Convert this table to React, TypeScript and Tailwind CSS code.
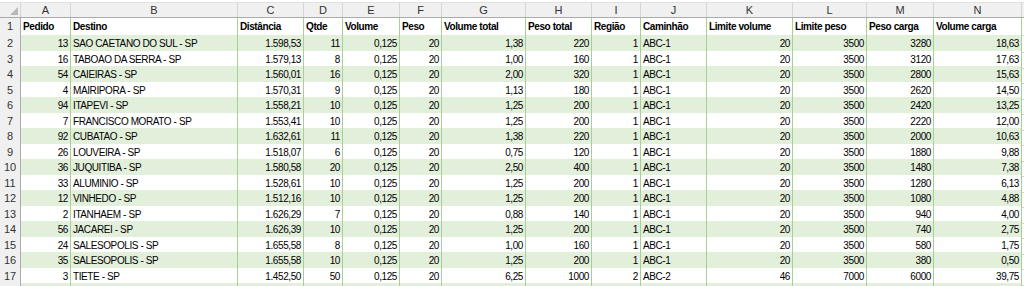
import React from 'react';

const cols = ['A', 'B', 'C', 'D', 'E', 'F', 'G', 'H', 'I', 'J', 'K', 'L', 'M', 'N'];

const headers = [
  'Pedido', 'Destino', 'Distância', 'Qtde', 'Volume', 'Peso', 'Volume total',
  'Peso total', 'Região', 'Caminhão', 'Limite volume', 'Limite peso', 'Peso carga', 'Volume carga',
];

// true = text column (left aligned)
const textCols = [false, true, false, false, false, false, false, false, false, true, false, false, false, false];

const rows: string[][] = [
  ['13', 'SAO CAETANO DO SUL - SP', '1.598,53', '11', '0,125', '20', '1,38', '220', '1', 'ABC-1', '20', '3500', '3280', '18,63'],
  ['16', 'TABOAO DA SERRA - SP', '1.579,13', '8', '0,125', '20', '1,00', '160', '1', 'ABC-1', '20', '3500', '3120', '17,63'],
  ['54', 'CAIEIRAS - SP', '1.560,01', '16', '0,125', '20', '2,00', '320', '1', 'ABC-1', '20', '3500', '2800', '15,63'],
  ['4', 'MAIRIPORA - SP', '1.570,31', '9', '0,125', '20', '1,13', '180', '1', 'ABC-1', '20', '3500', '2620', '14,50'],
  ['94', 'ITAPEVI - SP', '1.558,21', '10', '0,125', '20', '1,25', '200', '1', 'ABC-1', '20', '3500', '2420', '13,25'],
  ['7', 'FRANCISCO MORATO - SP', '1.553,41', '10', '0,125', '20', '1,25', '200', '1', 'ABC-1', '20', '3500', '2220', '12,00'],
  ['92', 'CUBATAO - SP', '1.632,61', '11', '0,125', '20', '1,38', '220', '1', 'ABC-1', '20', '3500', '2000', '10,63'],
  ['26', 'LOUVEIRA - SP', '1.518,07', '6', '0,125', '20', '0,75', '120', '1', 'ABC-1', '20', '3500', '1880', '9,88'],
  ['36', 'JUQUITIBA - SP', '1.580,58', '20', '0,125', '20', '2,50', '400', '1', 'ABC-1', '20', '3500', '1480', '7,38'],
  ['33', 'ALUMINIO - SP', '1.528,61', '10', '0,125', '20', '1,25', '200', '1', 'ABC-1', '20', '3500', '1280', '6,13'],
  ['12', 'VINHEDO - SP', '1.512,16', '10', '0,125', '20', '1,25', '200', '1', 'ABC-1', '20', '3500', '1080', '4,88'],
  ['2', 'ITANHAEM - SP', '1.626,29', '7', '0,125', '20', '0,88', '140', '1', 'ABC-1', '20', '3500', '940', '4,00'],
  ['56', 'JACAREI - SP', '1.626,39', '10', '0,125', '20', '1,25', '200', '1', 'ABC-1', '20', '3500', '740', '2,75'],
  ['24', 'SALESOPOLIS - SP', '1.655,58', '8', '0,125', '20', '1,00', '160', '1', 'ABC-1', '20', '3500', '580', '1,75'],
  ['35', 'SALESOPOLIS - SP', '1.655,58', '10', '0,125', '20', '1,25', '200', '1', 'ABC-1', '20', '3500', '380', '0,50'],
  ['3', 'TIETE - SP', '1.452,50', '50', '0,125', '20', '6,25', '1000', '2', 'ABC-2', '46', '7000', '6000', '39,75'],
];

const grid =
  'grid grid-cols-[21px_50px_167px_66px_39px_57px_42px_84px_66px_49px_66px_86px_74px_67px_88px_1fr]';

const App: React.FC = () => {
  return (
    <div
      className="w-[1024px] h-[286px] overflow-hidden bg-white text-[10px] tracking-[-0.4px] text-black"
      style={{ fontFamily: '"Liberation Sans", Arial, sans-serif' }}
    >
      {/* strip under the formula bar */}
      <div className="h-[3px] bg-white border-b border-[#e1e1e1]" />

      {/* column letters */}
      <div className={`${grid} h-[15px] bg-[#f0f0f0] text-[#333] text-[11px] tracking-normal border-b border-[#ababab]`}>
        <div className="flex items-end justify-end pr-[2px] pb-[2px] border-r border-[#d4d4d4]">
          <svg width="8" height="8" viewBox="0 0 8 8">
            <polygon points="8,0 8,8 0,8" fill="#b8b8b8" />
          </svg>
        </div>
        {cols.map((c) => (
          <div key={c} className="flex items-center justify-center border-r border-[#d4d4d4] leading-none">
            {c}
          </div>
        ))}
        <div />
      </div>

      {/* header row 1 */}
      <div className={`${grid} h-[17px]`}>
        <div className="flex items-center justify-center bg-[#f0f0f0] text-[#333] text-[11px] tracking-normal border-r border-b border-r-[#ababab] border-b-[#d4d4d4]">
          1
        </div>
        {headers.map((h) => (
          <div
            key={h}
            className="flex items-center px-[2px] font-bold whitespace-nowrap overflow-hidden border-r border-b border-r-[#a9d08e] border-b-[#8ec46b]"
          >
            {h}
          </div>
        ))}
        <div className="border-b border-[#d4d4d4]" />
      </div>

      {/* data rows */}
      {rows.map((r, i) => {
        const green = i % 2 === 0;
        return (
          <div key={i} className={`${grid} ${i % 2 === 0 ? 'h-[16px]' : 'h-[15px]'}`}>
            <div className="flex items-center justify-center bg-[#f0f0f0] text-[#333] text-[11px] tracking-normal border-r border-b border-r-[#ababab] border-b-[#d4d4d4]">
              {i + 2}
            </div>
            {r.map((v, j) => (
              <div
                key={j}
                className={`flex items-center px-[2px] whitespace-nowrap overflow-hidden border-r border-b border-[#a9d08e] ${
                  textCols[j] ? 'justify-start' : 'justify-end'
                } ${green ? 'bg-[#e2efda]' : 'bg-white'}`}
              >
                {v}
              </div>
            ))}
            <div className="border-b border-[#d4d4d4]" />
          </div>
        );
      })}

      {/* partial row 18 */}
      <div className={`${grid} h-[15px]`}>
        <div className="bg-[#f0f0f0] border-r border-[#ababab]" />
        {cols.map((c) => (
          <div key={c} className="bg-[#e2efda] border-r border-[#a9d08e]" />
        ))}
        <div />
      </div>
    </div>
  );
};

export default App;
